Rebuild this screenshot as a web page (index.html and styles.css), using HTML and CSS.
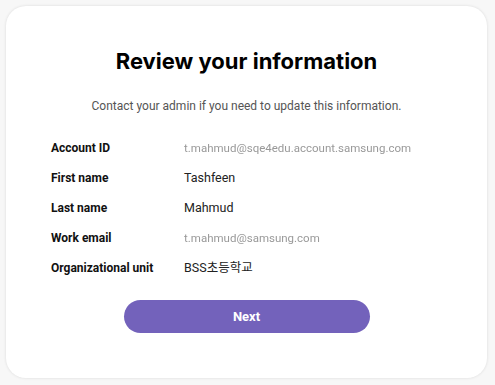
FILE: index.html
```html
<!DOCTYPE html>
<html lang="en">
<head>
    <meta charset="UTF-8">
    <title>Review your information</title>
    <link rel="stylesheet" href="styles.css">
</head>
<body>

    <div class="card">
        <h1>Review your information</h1>
        <p class="note">Contact your admin if you need to update this information.</p>

        <div class="info">
            <div class="label">Account ID</div>
            <div class="value blurred">t.mahmud@sqe4edu.account.samsung.com</div>
            <div class="label">First name</div>
            <div class="value">Tashfeen</div>
            <div class="label">Last name</div>
            <div class="value">Mahmud</div>
            <div class="label">Work email</div>
            <div class="value blurred">t.mahmud@samsung.com</div>
            <div class="label">Organizational unit</div>
            <div class="value">BSS초등학교</div>
        </div>

        <button class="next">Next</button>
    </div>

</body>
</html>
```

FILE: styles.css
```css
body {
    margin: 0;
    padding: 6px 8px 7px 6px;
    background-color: #f7f7f7;
    font-family: 'Roboto', 'Noto Sans CJK KR', sans-serif;
}
.card {
    height: 372px;
    box-sizing: border-box;
    background-color: #fff;
    border-radius: 20px;
    box-shadow: 0 0 3px rgba(0, 0, 0, 0.12);
    padding: 42px 0 0 0;
    display: flex;
    flex-direction: column;
    align-items: center;
}
h1 {
    margin: 0;
    font-family: 'Inter', sans-serif;
    font-size: 22px;
    font-weight: 700;
    color: #000;
}
.note {
    margin: 25px 0 20px 0;
    font-size: 12px;
    color: #555;
}
.info {
    align-self: stretch;
    display: grid;
    grid-template-columns: 133px 1fr;
    padding-left: 45px;
    font-size: 12.5px;
    line-height: 30px;
}
.label {
    font-weight: 700;
    font-size: 12px;
    color: #111;
}
.value {
    color: #222;
}
.blurred {
    color: #999;
    filter: blur(0.6px);
    font-size: 11.5px;
}
.next {
    margin-top: 17px;
    width: 246px;
    height: 33px;
    border: none;
    border-radius: 17px;
    background-color: #7362bb;
    color: #fff;
    font-family: 'Roboto', sans-serif;
    font-size: 13px;
    font-weight: 700;
    cursor: pointer;
}
```
